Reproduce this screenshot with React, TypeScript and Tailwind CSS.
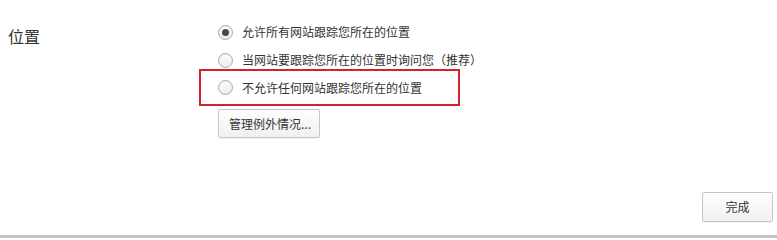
import React from "react";

function Radio({ checked }: { checked?: boolean }) {
  return (
    <span className="w-[15px] h-[15px] rounded-full border border-[#a9a9a9] bg-gradient-to-b from-[#fdfdfd] to-[#ececec] flex items-center justify-center shrink-0 shadow-[inset_0_1px_1px_rgba(0,0,0,0.06)]">
      {checked && <span className="w-[7px] h-[7px] rounded-full bg-[#4a4a4a]" />}
    </span>
  );
}

export default function App() {
  const font = "font-['Microsoft_YaHei','Noto_Sans_CJK_SC','Noto_Sans',sans-serif]";
  return (
    <div className={`relative w-[777px] h-[238px] bg-white flex flex-col text-[#333] ${font}`}>
      <div className="flex flex-1">
        <div className="w-[218px] pl-[8px] pt-[26px] text-[16px] leading-[20px] text-[#333]">位置</div>
        <div className="flex flex-col pt-[18px] text-[12px]">
          <div className="h-[28px] flex items-center gap-[9px]">
            <Radio checked />
            <span>允许所有网站跟踪您所在的位置</span>
          </div>
          <div className="h-[28px] flex items-center gap-[9px]">
            <Radio />
            <span>当网站要跟踪您所在的位置时询问您（推荐）</span>
          </div>
          <div className="h-[27px] flex items-center gap-[9px]">
            <Radio />
            <span>不允许任何网站跟踪您所在的位置</span>
          </div>
          <div className="mt-[8px]">
            <button className="h-[29px] w-[102px] border border-[#c6c6c6] rounded-[2px] bg-gradient-to-b from-[#fefefe] to-[#f0f0f0] text-[12px] text-[#333] pl-[10px] text-left shadow-[0_1px_0_rgba(0,0,0,0.05)]">
              管理例外情况...
            </button>
          </div>
        </div>
      </div>
      <div className="flex justify-end pr-[4px] pb-[13px]">
        <button className="h-[30px] w-[71px] border border-[#c6c6c6] rounded-[2px] bg-gradient-to-b from-[#fefefe] to-[#f0f0f0] text-[12px] text-[#333] shadow-[0_1px_0_rgba(0,0,0,0.05)]">
          完成
        </button>
      </div>
      <div className="h-[3px] bg-[#c4c4c4]" />
      <div className="absolute left-[199px] top-[69px] w-[261px] h-[37px] border-2 border-[#d0232b] pointer-events-none" />
    </div>
  );
}
